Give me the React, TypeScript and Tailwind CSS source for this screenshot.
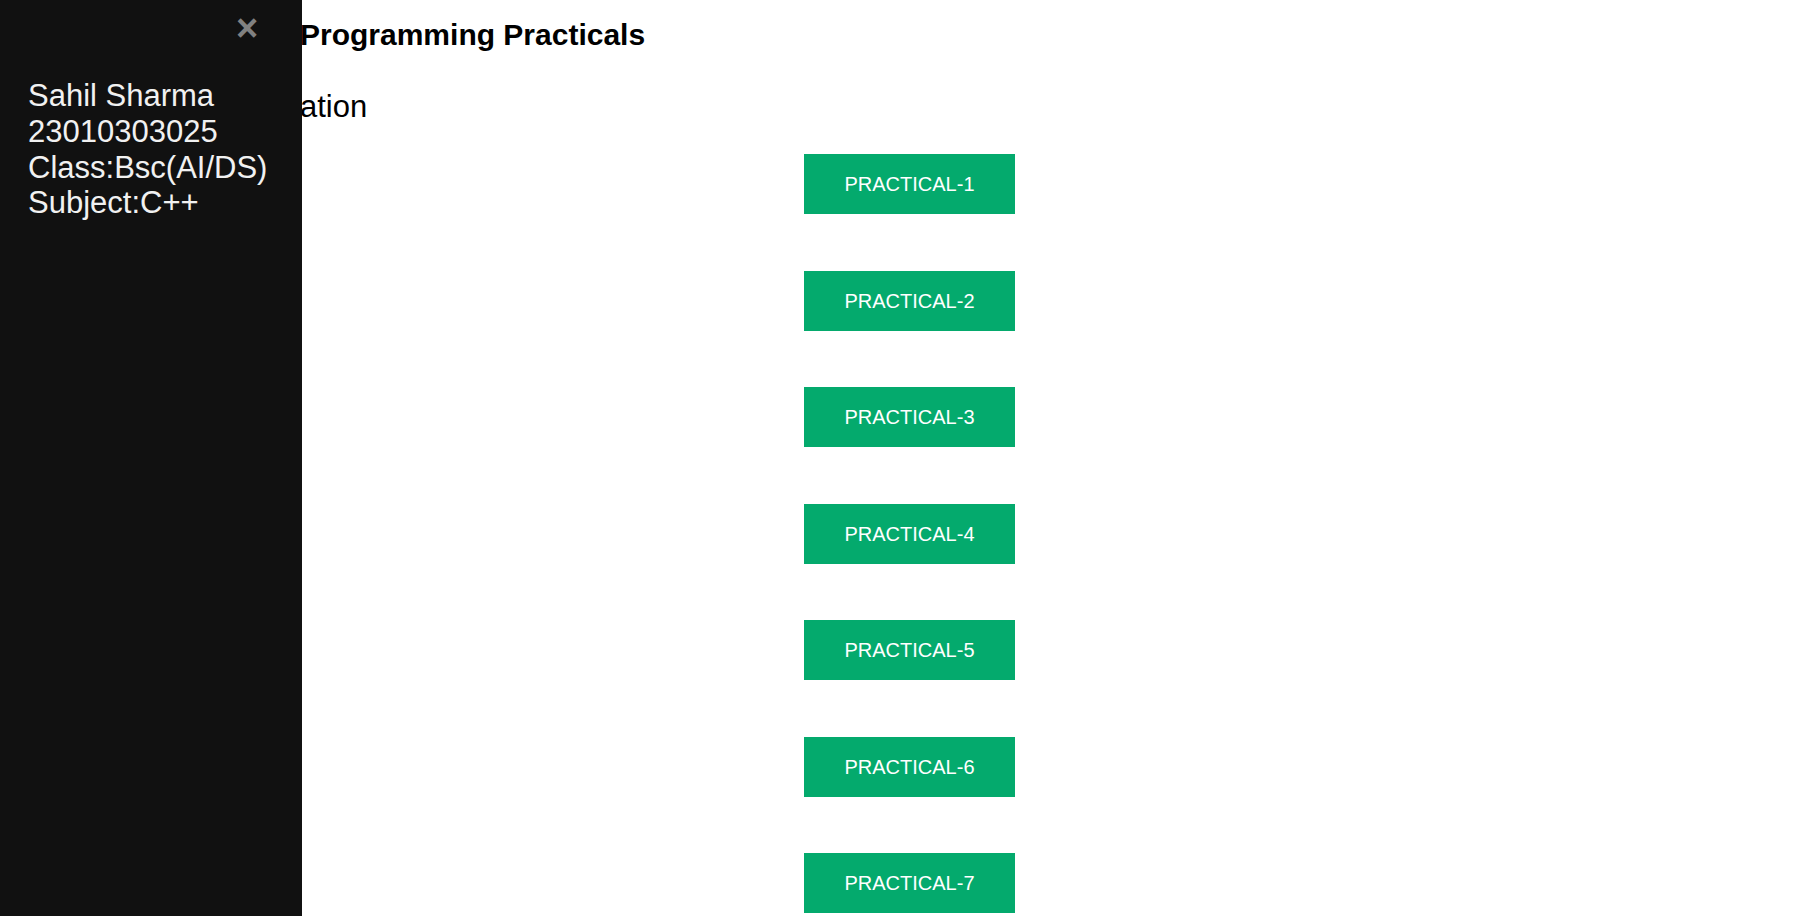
import React from "react";

const practicals = [1, 2, 3, 4, 5, 6, 7];

const Sidebar = () => {
  return (
    <div className="fixed top-0 left-0 z-10 h-screen w-[302px] bg-[#111111] text-[#f1f1f1]">
      <span className="absolute left-[236px] top-[9px] cursor-pointer text-[38px] font-bold leading-none text-[#818181]">
        ×
      </span>
      <div className="pl-[28px] pt-[78px] text-[31px] leading-[35.8px]">
        <div>Sahil Sharma</div>
        <div>23010303025</div>
        <div>Class:Bsc(AI/DS)</div>
        <div>Subject:C++</div>
      </div>
    </div>
  );
};

export default function App() {
  return (
    <div
      className="relative h-[916px] overflow-hidden bg-white text-black"
      style={{ fontFamily: '"Liberation Sans", Arial, sans-serif' }}
    >
      <Sidebar />
      <div className="pt-[18px]">
        {/* the open side nav hides the start of these two lines */}
        <div className="ml-[300px] whitespace-nowrap">
          <h2 className="text-[30px] font-bold leading-[34.5px]">Programming Practicals</h2>
          <p className="mt-[36px] text-[31px] leading-[35.6px]">ation</p>
        </div>
        <div className="mt-[30px] flex flex-col items-center gap-[56.5px]">
          {practicals.map((n) => (
            <button
              key={n}
              className="-ml-px flex h-[60px] w-[211px] items-center justify-center bg-[#04AA6D] text-[20px] text-white"
            >
              PRACTICAL-{n}
            </button>
          ))}
        </div>
      </div>
    </div>
  );
}
